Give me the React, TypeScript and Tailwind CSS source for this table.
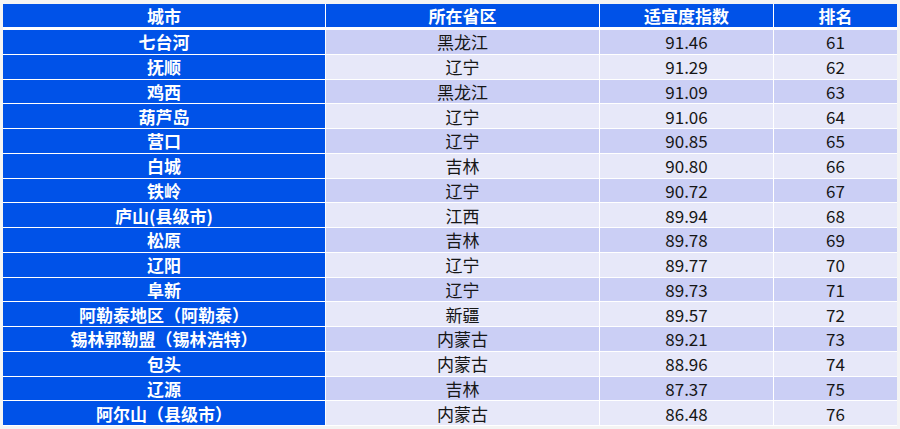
import React from 'react';

const rows: [string, string, string, number][] = [
  ['七台河', '黑龙江', '91.46', 61],
  ['抚顺', '辽宁', '91.29', 62],
  ['鸡西', '黑龙江', '91.09', 63],
  ['葫芦岛', '辽宁', '91.06', 64],
  ['营口', '辽宁', '90.85', 65],
  ['白城', '吉林', '90.80', 66],
  ['铁岭', '辽宁', '90.72', 67],
  ['庐山(县级市)', '江西', '89.94', 68],
  ['松原', '吉林', '89.78', 69],
  ['辽阳', '辽宁', '89.77', 70],
  ['阜新', '辽宁', '89.73', 71],
  ['阿勒泰地区（阿勒泰）', '新疆', '89.57', 72],
  ['锡林郭勒盟（锡林浩特）', '内蒙古', '89.21', 73],
  ['包头', '内蒙古', '88.96', 74],
  ['辽源', '吉林', '87.37', 75],
  ['阿尔山（县级市）', '内蒙古', '86.48', 76],
];

const cols = 'grid grid-cols-[322px_273px_173px_123px] gap-px';

export default function App() {
  return (
    <div
      className="w-[900px] h-[429px] bg-[#f4f4f4] pt-[4px] pl-[3px]"
      style={{ fontFamily: '"Noto Sans CJK SC", "Noto Sans", sans-serif' }}
    >
      <div className="w-[894px] bg-white pr-px pb-px flex flex-col">
        {/* Header */}
        <div className={`${cols} h-[23px] text-white font-bold text-[17px]`}>
          {['城市', '所在省区', '适宜度指数', '排名'].map((h) => (
            <div key={h} className="bg-[#0052e8] flex items-center justify-center leading-none">
              {h}
            </div>
          ))}
        </div>

        {/* Body */}
        <div className="mt-[3px] flex flex-col gap-px">
          {rows.map(([city, prov, idx, rank], i) => {
            const fill = i % 2 === 0 ? 'bg-[#cbcff5]' : 'bg-[#e7e8f9]';
            return (
              <div key={city} className={`${cols} h-[23.75px] text-[17px] leading-none`}>
                <div className="bg-[#0052e8] text-white font-bold flex items-center justify-center">
                  {city}
                </div>
                <div className={`${fill} text-[#161616] flex items-center justify-center`}>{prov}</div>
                <div className={`${fill} text-[#161616] flex items-center justify-center`}>{idx}</div>
                <div className={`${fill} text-[#161616] flex items-center justify-center`}>{rank}</div>
              </div>
            );
          })}
        </div>
      </div>
    </div>
  );
}
